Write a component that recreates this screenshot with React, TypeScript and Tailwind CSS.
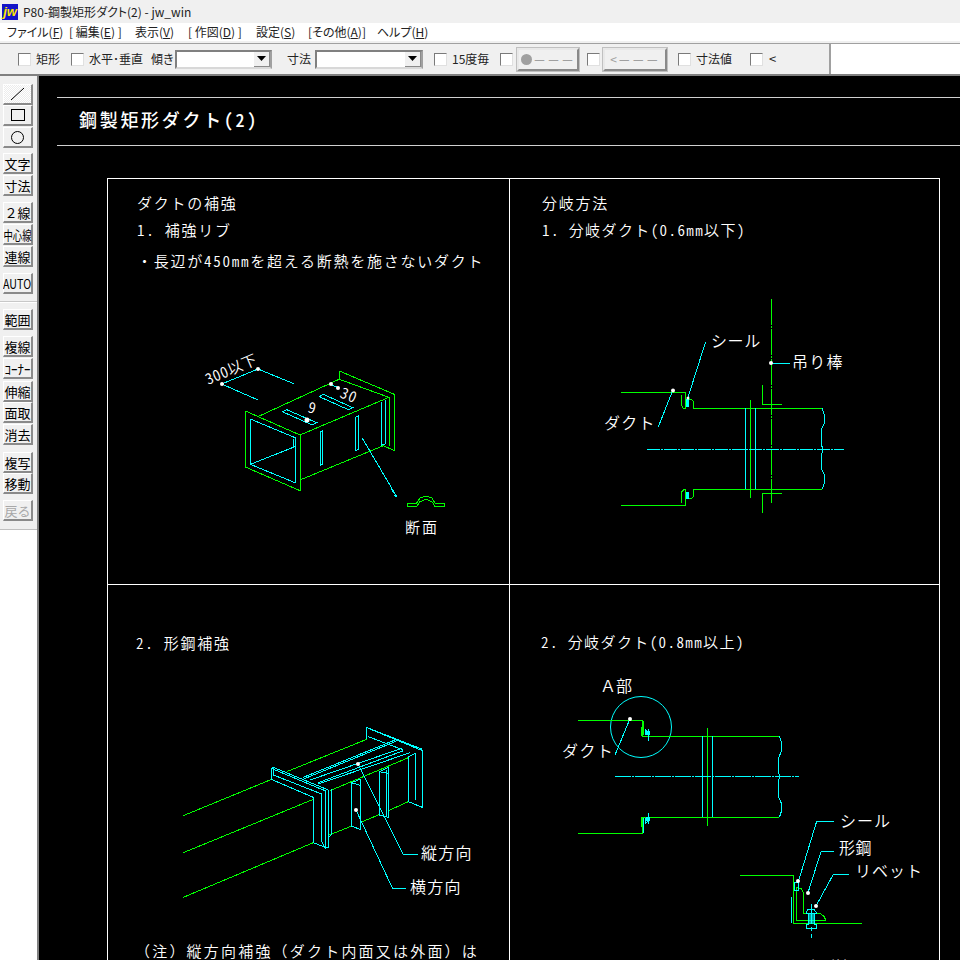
import React from "react";

const G = "#00ff00";
const C = "#00ffff";
const W = "#ffffff";
const CAD_FONT = "'Noto Sans CJK JP', sans-serif";

// zoom-crop coordinates (3x) to page coordinates
const conv = (ox: number, oy: number, p: string) =>
  p
    .trim()
    .split(/\s+/)
    .map((pair) => {
      const [x, y] = pair.split(",").map(Number);
      return `${ox + x / 3},${oy + y / 3}`;
    })
    .join(" ");

function makeLine(ox: number, oy: number) {
  return (p: string, color = G, dash?: string, fill = "none") => (
    <polyline key={p + color} points={conv(ox, oy, p)} fill={fill} stroke={color} strokeWidth={1} strokeDasharray={dash} />
  );
}

function Dot({ x, y, r = 2 }: { x: number; y: number; r?: number }) {
  return <circle cx={x} cy={y} r={r} fill={W} />;
}

function T({ x, y, s = 16, sp = 1.75, w = 350, rot, full, children }: { x: number; y: number; s?: number; sp?: number; w?: number; rot?: number; full?: boolean; children: React.ReactNode }) {
  return (
    <text
      x={x}
      y={y}
      fill={W}
      fontSize={s}
      fontWeight={w}
      letterSpacing={sp}
      fontFamily={CAD_FONT}
      className={full ? "[font-feature-settings:normal]" : undefined}
      transform={rot ? `rotate(${rot} ${x} ${y})` : undefined}
    >
      {children}
    </text>
  );
}

function Drawing1() {
  const l = makeLine(190, 340);
  return (
    <g shapeRendering="crispEdges">
      {l("166,213 330,285 330,452 166,381 166,213")}
      {l("208,228 447,118")}
      {l("330,285 597,172")}
      {l("330,420 580,317")}
      {l("448,93 613,163 613,332 580,317")}
      {l("448,93 448,118 597,172 597,317")}
      {l("181,237 315,293 315,428 181,373 181,237", C)}
      {l("181,373 315,320", C)}
      {l("310,297 310,320", C)}
      {l("575,185 575,315 585,312 585,180", C)}
      {l("277,215 290,209 380,248 367,255 277,215", C)}
      {l("388,170 400,163 488,203 475,209 388,170", C)}
      {l("391,275 398,272 398,373 391,376 391,275", C)}
      {l("495,233 505,228 505,328 495,332 495,233", C)}
      {l("204,180 95,132 204,87 311,131", C)}
      {l("420,133 445,143", C)}
      {l("516,293 620,470", C)}
      {l("604,447 620,470 612,465", C)}
      {l("651,489 680,489 690,474 708,468 726,474 735,489 764,489 764,499 735,499 726,485 708,478 690,485 680,499 651,499 651,489")}
    </g>
  );
}

function Drawing2() {
  const l = makeLine(590, 290);
  return (
    <g shapeRendering="crispEdges">
      {l("93,307 287,307 287,355 280,355 274,345 274,316")}
      {l("297,328 305,328 310,335 310,355 697,355")}
      {l("93,646 287,646 287,598 280,600 274,607 274,638")}
      {l("287,625 305,625 310,620 310,598 697,598")}
      {l("481,330 481,623")}
      {l("544,27 544,640", G, "26 1 2 1")}
      {l("517,285 517,343 575,343")}
      {l("517,668 517,610 575,610")}
      {l("466,355 466,598", C)}
      {l("496,355 496,598", C)}
      {l("171,478 762,478", C, "13 1 2 1")}
      {l("697,355 703,375 703,400 694,418 694,465 700,478 694,495 694,535 703,555 703,580 697,598", C)}
      {l("248,302 205,410", C)}
      {l("347,155 293,325", C)}
      {l("543,219 600,219", C)}
      <rect x={686} y={399} width={3} height={8} fill={C} />
      <rect x={686} y={492} width={3} height={7} fill={C} />
    </g>
  );
}

function Drawing3() {
  const l = makeLine(170, 720);
  return (
    <g shapeRendering="crispEdges">
      {l("40,287 305,178")}
      {l("40,398 430,238")}
      {l("40,532 430,368")}
      {l("350,155 590,58")}
      {l("480,212 715,113")}
      {l("478,345 545,318")}
      {l("570,308 630,283")}
      {l("655,272 715,245")}
      {l("304,178 304,145 310,142 475,210 475,382 465,382 430,368 430,232 304,178", C)}
      {l("310,142 310,165 455,222 455,365 465,382 465,212 304,145", C)}
      {l("484,208 484,345 475,352", C)}
      {l("589,58 589,22 595,25 757,92 757,262 715,245 715,110 735,100 735,240", C)}
      {l("589,22 757,88", C)}
      {l("595,50 700,90", C)}
      {l("400,172 675,60", C)}
      {l("403,176 678,64", C)}
      {l("420,180 695,85", C)}
      {l("445,192 720,98", C)}
      {l("445,188 700,92", C)}
      {l("544,188 570,178 570,328 544,318 544,188", C)}
      {l("544,188 570,196 570,328", C)}
      {l("628,155 655,142 655,292 628,285 628,155", C)}
      {l("628,155 655,160", C)}
      {l("648,150 648,290", C)}
      {l("564,132 700,404 745,404", C)}
      {l("558,270 668,506 708,506", C)}
    </g>
  );
}

function Drawing4() {
  const l = makeLine(550, 670);
  return (
    <g shapeRendering="crispEdges">
      {l("84,151 277,151 277,199 688,199")}
      {l("280,153 280,196")}
      {l("274,170 274,199")}
      {l("84,490 277,490 277,441 688,441")}
      {l("274,441 274,470")}
      {l("280,444 280,488", C)}
      {l("472,175 472,467")}
      {l("457,199 457,441", C)}
      {l("487,199 487,441", C)}
      {l("195,319 747,319", C, "16 1 2 1")}
      {l("688,199 694,215 694,245 685,265 685,305 689,319 685,335 685,378 694,400 694,425 688,441", C)}
      {l("240,146 195,255", C)}
      {l("285,195 285,178 300,195", C)}
      {l("295,178 295,212", C)}
      {l("285,445 285,462 300,445", C)}
      {l("295,430 295,462", C)}
      <rect x={646} y={731} width={4} height={4} fill={C} />
      <rect x={646} y={817} width={4} height={4} fill={C} />
    </g>
  );
}

function Drawing5() {
  const l = makeLine(730, 800);
  return (
    <g shapeRendering="crispEdges">
      {l("0,52 148,52")}
      {l("152,0 155,15 155,35 148,52", C)}
      {l("30,227 190,227 190,370 395,370")}
      {l("184,292 184,370", C)}
      {l("199,262 199,361 287,361 283,350 270,340 221,340 221,280 214,266 199,262")}
      {l("312,64 260,64 205,245", C)}
      {l("312,155 273,155 234,278", C)}
      {l("357,223 310,223 258,318", C)}
      {l("244,312 244,415", C, "20 3 4 3")}
      {l("228,340 234,328 252,328 260,340 228,340", C)}
      {l("234,340 234,372 228,372 228,384 258,384 258,372 254,372 254,340", C)}
      {l("192,248 205,248 205,270 192,270 192,248", C)}
      <rect x={809} y={914} width={5} height={10} fill={C} opacity={0.6} />
    </g>
  );
}

function CadCanvas() {
  return (
    <svg width={921} height={884} viewBox="39 76 921 884" className="block [font-feature-settings:'hwid']">
      <g shapeRendering="crispEdges" stroke={W} strokeWidth={1} fill="none">
        <line x1={57} y1={97.5} x2={960} y2={97.5} stroke="#d0d0d0" />
        <line x1={57} y1={145.5} x2={960} y2={145.5} stroke="#d0d0d0" />
        <polyline points="107.5,970 107.5,178.5 939.5,178.5 939.5,970" />
        <line x1={509.5} y1={178} x2={509.5} y2={970} />
        <line x1={107} y1={584.5} x2={940} y2={584.5} />
      </g>

      <T x={79} y={127} s={18} sp={2.7} w={500}>鋼製矩形ダクト(2)</T>

      <T x={137} y={209} s={15}>ダクトの補強</T>
      <T x={137} y={236} s={15}>1. 補強リブ</T>
      <T x={137} y={267} s={15}>・長辺が450mmを超える断熱を施さないダクト</T>
      <T x={542} y={209} s={15}>分岐方法</T>
      <T x={542} y={236} s={15} sp={1.4}>1. 分岐ダクト(0.6mm以下)</T>
      <T x={136} y={649} s={15}>2. 形鋼補強</T>
      <T x={541} y={648} s={15} sp={1.4}>2. 分岐ダクト(0.8mm以上)</T>
      <T x={135} y={957} s={15} sp={2.2} full>（注）縦方向補強（ダクト内面又は外面）は</T>

      <Drawing1 />
      <Dot x={222} y={384} />
      <Dot x={258} y={369} />
      <Dot x={331} y={384} />
      <Dot x={338} y={388} />
      <Dot x={307} y={420} r={2.5} />
      <T x={208} y={385} s={15} sp={0.5} rot={-23}>300以下</T>
      <T x={307} y={412} s={15} sp={0} rot={15}>9</T>
      <T x={339} y={397} s={15} sp={1} rot={22}>30</T>
      <T x={405} y={533} s={15} sp={2}>断面</T>

      <Drawing2 />
      <Dot x={673} y={390.5} />
      <Dot x={688} y={398} r={1.5} />
      <Dot x={771} y={363} />
      <T x={711} y={347} s={16} sp={0.6}>シール</T>
      <T x={604} y={429} s={16} sp={1.2}>ダクト</T>
      <T x={792} y={368} s={16} sp={1.2}>吊り棒</T>

      <Drawing3 />
      <Dot x={358} y={764} />
      <Dot x={356} y={810} />
      <T x={421} y={859} s={16} sp={1.2}>縦方向</T>
      <T x={410} y={893} s={16} sp={1.2}>横方向</T>

      <circle cx={641} cy={727} r={30.5} fill="none" stroke={C} strokeWidth={1} />
      <Drawing4 />
      <Dot x={630} y={719} />
      <T x={600} y={692} s={16} sp={0} full>Ａ部</T>
      <T x={562} y={757} s={16} sp={1.4}>ダクト</T>

      <Drawing5 />
      <Dot x={798} y={881} />
      <Dot x={808} y={893} />
      <Dot x={816} y={906} />
      <T x={840} y={827} s={16} sp={1}>シール</T>
      <T x={839} y={854} s={16} sp={0.6}>形鋼</T>
      <T x={855} y={877} s={16} sp={1}>リベット</T>
      <T x={792} y={972} s={15} sp={1.6} full>Ａ部詳細</T>
    </svg>
  );
}

function Menu({ label, k, bracket }: { label: string; k: string; bracket?: boolean }) {
  return (
    <span className="whitespace-nowrap">
      {bracket ? "[ " : ""}
      {label}(<span className="underline">{k}</span>)
      {bracket ? " ]" : ""}
    </span>
  );
}

function Check({ className = "" }: { className?: string }) {
  return <span className={`block w-[13px] h-[13px] shrink-0 bg-white border border-t-[#7a7a7a] border-l-[#7a7a7a] border-r-[#e0e0e0] border-b-[#e0e0e0] ${className}`} />;
}

function Combo({ className = "" }: { className?: string }) {
  return (
    <div className={`h-[19px] shrink-0 bg-white border-2 border-t-[#808080] border-l-[#808080] border-r-[#a0a0a0] border-b-[#d8d8d8] flex justify-end ${className}`}>
      <span className="w-[16px] h-full bg-[#f0f0f0] border-r border-b border-[#8a8a8a] flex items-center justify-center">
        <svg width="9" height="5" viewBox="0 0 9 5">
          <path d="M0 0h9L4.5 5z" fill="#000" />
        </svg>
      </span>
    </div>
  );
}

function DashButton({ head, className = "" }: { head: React.ReactNode; className?: string }) {
  return (
    <div className={`h-[23px] shrink-0 bg-[#f0f0f0] border-2 border-t-[#e8e8e8] border-l-[#e8e8e8] border-r-[#8a8a8a] border-b-[#8a8a8a] outline outline-1 outline-[#c0c0c0] flex items-center justify-center gap-[1px] text-[#a0a0a0] ${className}`}>
      {head}
      <span className="tracking-[1px] text-[13px] leading-none">－－－</span>
    </div>
  );
}

function Tool({ children, className = "", active, disabled }: { children: React.ReactNode; className?: string; active?: boolean; disabled?: boolean }) {
  return (
    <div
      className={`w-[30px] h-[21px] shrink-0 flex items-center justify-center text-[13px] leading-none whitespace-nowrap border-r-2 border-b-2 border-r-[#8a8a8a] border-b-[#8a8a8a] border-t border-l border-t-white border-l-white ${active ? "bg-[repeating-conic-gradient(#ffffff_0%_25%,#ececec_0%_50%)] bg-[length:2px_2px]" : "bg-[#f0f0f0]"} ${disabled ? "text-[#a8a8a8]" : "text-black"} ${className}`}
    >
      {children}
    </div>
  );
}

export default function App() {
  return (
    <div className="w-[960px] h-[960px] overflow-hidden flex flex-col bg-black text-black font-['Noto_Sans_CJK_JP',sans-serif]">
      {/* title bar */}
      <div className="h-[23px] bg-[#f0f0f0] flex items-center pl-[2px] text-[12px] [font-feature-settings:'palt']">
        <div className="w-[16px] h-[16px] bg-[#1414c8] flex items-center justify-center text-[13px] leading-none font-bold italic text-[#ffe600] font-['Liberation_Sans',sans-serif]">
          jw
        </div>
        <span className="ml-[5px] text-[#222222]">P80-鋼製矩形ダクト(2) - jw_win</span>
      </div>

      {/* menu */}
      <div className="h-[18px] bg-white flex items-center pl-[7px] text-[12px] text-[#222222] [font-feature-settings:'palt']">
        <span className="w-[62px]"><Menu label="ファイル" k="F" /></span>
        <span className="w-[66px]"><Menu label="編集" k="E" bracket /></span>
        <span className="w-[53px]"><Menu label="表示" k="V" /></span>
        <span className="w-[68px]"><Menu label="作図" k="D" bracket /></span>
        <span className="w-[52px]"><Menu label="設定" k="S" /></span>
        <span className="w-[69px]">[<Menu label="その他" k="A" />]</span>
        <Menu label="ヘルプ" k="H" />
      </div>

      {/* options bar */}
      <div className="h-[35px] bg-[#f0f0f0] pt-[2px]">
        <div className="h-full border-t border-t-[#a0a0a0] border-b-2 border-b-[#808080] flex text-[12px] text-[#222222] [font-feature-settings:'palt']">
          <div className="w-[829px] flex items-center pl-[18px]">
            <Check />
            <span className="ml-[5px] w-[24px] whitespace-nowrap">矩形</span>
            <Check className="ml-[11px]" />
            <span className="ml-[5px] w-[53px] whitespace-nowrap">水平･垂直</span>
            <span className="ml-[9px] w-[21px] whitespace-nowrap">傾き</span>
            <Combo className="ml-[3px] w-[97px]" />
            <span className="ml-[15px] w-[24px] whitespace-nowrap">寸法</span>
            <Combo className="ml-[4px] w-[108px]" />
            <Check className="ml-[11px]" />
            <span className="ml-[5px] w-[39px] whitespace-nowrap">15度毎</span>
            <Check className="ml-[9px]" />
            <DashButton
              className="ml-[4px] w-[62px]"
              head={<span className="block w-[11px] h-[11px] rounded-full bg-[#a0a0a0]" />}
            />
            <Check className="ml-[8px]" />
            <DashButton className="ml-[3px] w-[64px]" head={<span className="text-[12px] leading-none">&lt;</span>} />
            <Check className="ml-[11px]" />
            <span className="ml-[5px] w-[36px] whitespace-nowrap">寸法値</span>
            <Check className="ml-[18px]" />
            <span className="ml-[6px] text-[13px]">&lt;</span>
          </div>
          <div className="flex-1 bg-white border-l-2 border-l-[#a0a0a0]" />
        </div>
      </div>

      <div className="flex-1 flex min-h-0">
        {/* tool column */}
        <div className="w-[39px] bg-white border-r-2 border-r-[#808080] flex flex-col">
          <div className="bg-[#f0f0f0] flex flex-col pl-[3px] pt-[8px]">
            <Tool active>
              <svg width="18" height="14" viewBox="0 0 18 14"><path d="M2 13L15 1" stroke="#000" fill="none" /></svg>
            </Tool>
            <Tool>
              <span className="block w-[14px] h-[12px] border border-black" />
            </Tool>
            <Tool className="mt-[1px]">
              <span className="block w-[13px] h-[13px] rounded-full border border-black" />
            </Tool>
            <Tool className="mt-[5px]">文字</Tool>
            <Tool className="mt-[1px]">寸法</Tool>
            <Tool className="mt-[6px]">２線</Tool>
            <Tool className="mt-[1px]"><span className="inline-block scale-x-[0.72]">中心線</span></Tool>
            <Tool className="mt-[1px]">連線</Tool>
            <Tool className="mt-[6px] text-[12px]"><span className="inline-block scale-x-[0.82]">AUTO</span></Tool>
            <div className="-ml-[3px] mt-[7px] h-[2px] border-t border-t-[#c8c8c8] bg-white" />
            <Tool className="mt-[6px]">範囲</Tool>
            <Tool className="mt-[6px]">複線</Tool>
            <Tool className="mt-[1px] text-[11px]">ｺｰﾅｰ</Tool>
            <Tool className="mt-[2px]">伸縮</Tool>
            <Tool>面取</Tool>
            <Tool className="mt-[1px]">消去</Tool>
            <Tool className="mt-[7px]">複写</Tool>
            <Tool>移動</Tool>
            <Tool className="mt-[6px]" disabled>戻る</Tool>
            <div className="mt-[8px]" />
          </div>
          <div className="h-[1px] bg-[#c0c0c0]" />
        </div>

        {/* drawing area */}
        <div className="flex-1 bg-black min-w-0">
          <CadCanvas />
        </div>
      </div>
    </div>
  );
}
